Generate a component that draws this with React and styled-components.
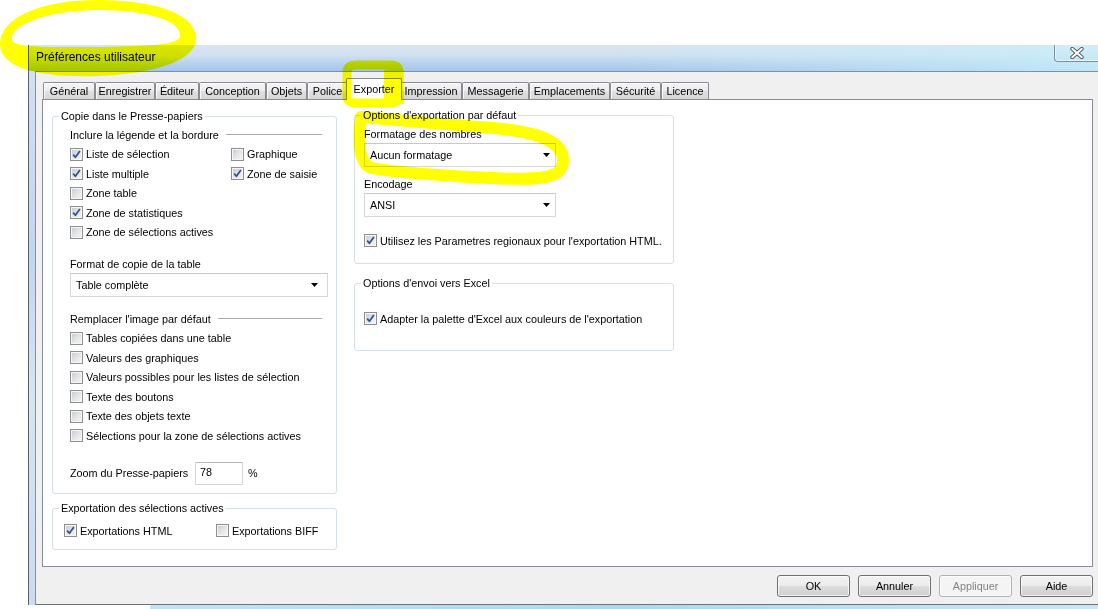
import React from 'react';
import styled, { createGlobalStyle } from 'styled-components';

const GlobalStyle = createGlobalStyle`
  html, body { margin: 0; padding: 0; background: #ffffff; }
  body {
    font-family: "Liberation Sans", Arial, sans-serif;
    font-size: 10.8px;
    color: #000;
  }
  *, *::before, *::after { box-sizing: border-box; }
`;

const Page = styled.div`
  position: relative;
  width: 1098px;
  height: 609px;
  overflow: hidden;
  background: #fff;
  padding: 45px 0 0 28px;
`;

const Window = styled.div`
  display: flex;
  flex-direction: column;
  height: 560px;
  border-left: 1px solid #56606b;
`;

const TitleBar = styled.div`
  display: flex;
  align-items: flex-start;
  height: 26px;
  flex: none;
  background:
    linear-gradient(to right, rgba(255,255,255,0) 55%, rgba(200,238,250,0.8) 100%),
    linear-gradient(to bottom, #dae6f2 0%, #cfe0f0 40%, #b6d1ee 72%, #a6c5ea 100%);
`;

const Title = styled.div`
  padding: 5px 0 0 7px;
  font-size: 12px;
  line-height: 14px;
  color: #000;
`;

const CloseButton = styled.div`
  margin-left: auto;
  width: 44px;
  height: 17px;
  display: flex;
  align-items: center;
  justify-content: center;
  border: 1px solid #7c8ea3;
  border-top: none;
  border-right: none;
  border-radius: 0 0 0 4px;
  background: linear-gradient(to bottom, #d3edf9, #c3e7f7);
  box-shadow: inset 1px 0 0 rgba(255,255,255,0.6), inset 0 -1px 0 rgba(255,255,255,0.6);
`;

const Frame = styled.div`
  flex: 1;
  display: flex;
  min-height: 0;
`;

const FrameEdge = styled.div`
  width: 6px;
  flex: none;
  background: linear-gradient(to bottom, #d2e1f0 0%, #c2d6ec 35%, #d6e5f2 60%, #cbdcee 100%);
`;

const Client = styled.div`
  flex: 1;
  display: flex;
  flex-direction: column;
  background: #f0f0f0;
  border-top: 1px solid #8a8d92;
  border-left: 1px solid #8f8f8f;
  border-bottom: 1px solid #6f7276;
  padding: 6px 5px 0 6px;
`;

const TabRow = styled.div`
  display: flex;
  align-items: flex-end;
  height: 22px;
  padding-left: 1px;
  margin-bottom: -1px;
  position: relative;
  z-index: 1;
`;

const Tab = styled.div`
  flex: none;
  position: relative;
  z-index: ${p => (p.$active ? 2 : 1)};
  width: ${p => p.$w + (p.$active ? 4 : 0)}px;
  height: ${p => (p.$active ? 22 : 17)}px;
  margin: 0 ${p => (p.$active ? -2 : 0)}px ${p => (p.$active ? 0 : 1)}px;
  display: flex;
  align-items: center;
  justify-content: center;
  border: 1px solid #898c95;
  border-bottom: none;
  border-radius: 2px 2px 0 0;
  background: ${p =>
    p.$active
      ? '#ffffff'
      : 'linear-gradient(to bottom, #f5f5f5 0%, #ececec 50%, #e0e0e0 51%, #d6d6d6 100%)'};
  box-shadow: ${p => (p.$active ? 'none' : 'inset 1px 1px 0 rgba(255,255,255,0.8)')};
  white-space: nowrap;
  line-height: 13px;
  padding-bottom: ${p => (p.$active ? 1 : 0)}px;
`;

const Panel = styled.div`
  height: 468px;
  flex: none;
  background: #fff;
  border: 1px solid #898c95;
  display: flex;
  align-items: flex-start;
  padding: 10px 0 0 9px;
`;

const Column = styled.div`
  display: flex;
  flex-direction: column;
  width: ${p => p.$w}px;
  gap: ${p => p.$gap}px;
  margin-left: ${p => p.$ml || 0}px;
  margin-top: ${p => p.$mt || 0}px;
`;

const Group = styled.fieldset`
  margin: 0;
  padding: 0 6px;
  min-width: 0;
  height: ${p => p.$h}px;
  border: 1px solid #d5dfe5;
  border-radius: 3px;
`;

const Legend = styled.legend`
  padding: 0 2px;
  line-height: 13px;
  font-size: 10.8px;
  color: #000;
`;

const GroupBody = styled.div`
  display: flex;
  flex-direction: column;
  padding-left: ${p => p.$pl}px;
  padding-top: ${p => p.$pt || 0}px;
`;

const Subheader = styled.div`
  display: flex;
  align-items: center;
  height: 19.5px;
  margin-top: ${p => p.$mt || 0}px;
  white-space: nowrap;
  &::after {
    content: '';
    flex: 1;
    border-top: 1px solid #a9a9a9;
    margin: 0 8px 0 7px;
  }
`;

const FieldLabel = styled.div`
  height: 14px;
  line-height: 14px;
  margin-top: ${p => p.$mt || 0}px;
  white-space: nowrap;
`;

const CheckGrid = styled.div`
  display: grid;
  grid-template-columns: ${p => p.$col}px auto;
  margin-top: ${p => p.$mt || 0}px;
  padding-left: ${p => p.$pl || 0}px;
`;

const CheckRow = styled.div`
  display: flex;
  align-items: center;
  gap: 3px;
  height: 19.5px;
  white-space: nowrap;
  grid-column: ${p => p.$gc || 'auto'};
  margin-top: ${p => p.$mt || 0}px;
`;

const Box = styled.span`
  width: 13px;
  height: 13px;
  flex: none;
  display: inline-flex;
  border: 1px solid #8e8f8f;
  background: #f6f6f6;
  padding: 1px;
`;

const BoxInner = styled.span`
  flex: 1;
  display: flex;
  align-items: center;
  justify-content: center;
  background: linear-gradient(135deg, #c9cdd2 0%, #e0e2e5 45%, #f3f3f4 100%);
`;

const Select = styled.div`
  width: ${p => p.$w}px;
  height: 24px;
  margin-top: 2px;
  display: flex;
  align-items: center;
  padding-left: 5px;
  background: #fff;
  border: 1px solid #d8d8d8;
  border-top-color: #c8c8c8;
`;

const SelectValue = styled.span`
  flex: 1;
  white-space: nowrap;
`;

const Caret = styled.svg`
  flex: none;
  margin-right: ${p => p.$mr}px;
`;

const ZoomRow = styled.div`
  display: flex;
  align-items: center;
  height: 23px;
  margin-top: 16px;
`;

const ZoomLabel = styled.span`
  width: 125px;
  white-space: nowrap;
`;

const NumberBox = styled.div`
  width: 48px;
  height: 23px;
  padding: 3px 0 0 4px;
  line-height: 13px;
  border: 1px solid #d3d7dc;
  border-top-color: #b8bcc2;
  background: #fff;
`;

const Unit = styled.span`
  margin-left: 5px;
`;

const ButtonRow = styled.div`
  display: flex;
  justify-content: flex-end;
  gap: 8px;
  margin-top: 8px;
`;

const Button = styled.div`
  width: 73px;
  height: 22px;
  display: flex;
  align-items: center;
  justify-content: center;
  border: 1px solid ${p => (p.$disabled ? '#adb2b5' : '#707070')};
  border-radius: 3px;
  background: ${p =>
    p.$disabled
      ? '#f4f4f4'
      : 'linear-gradient(to bottom, #f2f2f2 0%, #ebebeb 49%, #dddddd 50%, #cfcfcf 100%)'};
  color: ${p => (p.$disabled ? '#838383' : '#000')};
  box-shadow: inset 0 0 0 1px rgba(255,255,255,0.75);
`;

const BackStrip = styled.div`
  height: 4px;
  margin-left: 122px;
  background: linear-gradient(to right, #bfe4f6, #a9d9f1 50%, #c6e8f7);
`;

const Marker = styled.svg`
  position: absolute;
  left: 0;
  top: 0;
  z-index: 10;
  pointer-events: none;
  mix-blend-mode: multiply;
`;

const TABS = [
  { label: 'Général', w: 52 },
  { label: 'Enregistrer', w: 60 },
  { label: 'Éditeur', w: 44 },
  { label: 'Conception', w: 67 },
  { label: 'Objets', w: 41 },
  { label: 'Police', w: 41 },
  { label: 'Exporter', w: 52, active: true },
  { label: 'Impression', w: 62 },
  { label: 'Messagerie', w: 67 },
  { label: 'Emplacements', w: 81 },
  { label: 'Sécurité', w: 51 },
  { label: 'Licence', w: 48 },
];

function Check({ checked }) {
  return (
    <Box>
      <BoxInner>
        {checked && (
          <svg width="9" height="9" viewBox="0 0 9 9">
            <path d="M1.2 4.6 L3.4 7.3 L7.9 0.9" fill="none" stroke="#33508c" strokeWidth="1.7" strokeLinejoin="round" />
          </svg>
        )}
      </BoxInner>
    </Box>
  );
}

function CheckItem({ label, checked, gc, mt }) {
  return (
    <CheckRow $gc={gc} $mt={mt}>
      <Check checked={checked} />
      <span>{label}</span>
    </CheckRow>
  );
}

function Dropdown({ value, w, caretGap = 9 }) {
  return (
    <Select $w={w}>
      <SelectValue>{value}</SelectValue>
      <Caret $mr={caretGap} width="7" height="4" viewBox="0 0 7 4">
        <polygon points="0,0 7,0 3.5,4" fill="#000" />
      </Caret>
    </Select>
  );
}

export default function App() {
  return (
    <>
      <GlobalStyle />
      <Page>
        <Window>
          <TitleBar>
            <Title>Préférences utilisateur</Title>
            <CloseButton>
              <svg width="14" height="12" viewBox="0 0 14 12">
                <path d="M2.2 1.8 L11.8 10.2 M11.8 1.8 L2.2 10.2" stroke="#4c5866" strokeWidth="3.8" strokeLinecap="round" />
                <path d="M2.2 1.8 L11.8 10.2 M11.8 1.8 L2.2 10.2" stroke="#ffffff" strokeWidth="2" strokeLinecap="round" />
              </svg>
            </CloseButton>
          </TitleBar>
          <Frame>
            <FrameEdge />
            <Client>
              <TabRow>
                {TABS.map(t => (
                  <Tab key={t.label} $w={t.w} $active={t.active}>
                    {t.label}
                  </Tab>
                ))}
              </TabRow>
              <Panel>
                <Column $w={285} $gap={8}>
                  <Group $h={384}>
                    <Legend>Copie dans le Presse-papiers</Legend>
                    <GroupBody $pl={11} $pt={2}>
                      <Subheader>Inclure la légende et la bordure</Subheader>
                      <CheckGrid $col={161}>
                        <CheckItem label="Liste de sélection" checked />
                        <CheckItem label="Graphique" />
                        <CheckItem label="Liste multiple" checked />
                        <CheckItem label="Zone de saisie" checked />
                        <CheckItem label="Zone table" gc="1" />
                        <CheckItem label="Zone de statistiques" checked gc="1" />
                        <CheckItem label="Zone de sélections actives" gc="1" />
                      </CheckGrid>
                      <FieldLabel $mt={15}>Format de copie de la table</FieldLabel>
                      <Dropdown value="Table complète" w={258} />
                      <Subheader $mt={12}>Remplacer l'image par défaut</Subheader>
                      <CheckItem label="Tables copiées dans une table" />
                      <CheckItem label="Valeurs des graphiques" />
                      <CheckItem label="Valeurs possibles pour les listes de sélection" />
                      <CheckItem label="Texte des boutons" />
                      <CheckItem label="Texte des objets texte" />
                      <CheckItem label="Sélections pour la zone de sélections actives" />
                      <ZoomRow>
                        <ZoomLabel>Zoom du Presse-papiers</ZoomLabel>
                        <NumberBox>78</NumberBox>
                        <Unit>%</Unit>
                      </ZoomRow>
                    </GroupBody>
                  </Group>
                  <Group $h={48}>
                    <Legend>Exportation des sélections actives</Legend>
                    <CheckGrid $col={152} $mt={6} $pl={5}>
                      <CheckItem label="Exportations HTML" checked />
                      <CheckItem label="Exportations BIFF" />
                    </CheckGrid>
                  </Group>
                </Column>
                <Column $w={320} $gap={13} $ml={17} $mt={-1}>
                  <Group $h={155}>
                    <Legend>Options d'exportation par défaut</Legend>
                    <GroupBody $pl={3}>
                      <FieldLabel $mt={5}>Formatage des nombres</FieldLabel>
                      <Dropdown value="Aucun formatage" w={192} caretGap={5} />
                      <FieldLabel $mt={10}>Encodage</FieldLabel>
                      <Dropdown value="ANSI" w={192} caretGap={5} />
                      <CheckItem label="Utilisez les Parametres regionaux pour l'exportation HTML." checked mt={14} />
                    </GroupBody>
                  </Group>
                  <Group $h={74}>
                    <Legend>Options d'envoi vers Excel</Legend>
                    <GroupBody $pl={3}>
                      <CheckItem label="Adapter la palette d'Excel aux couleurs de l'exportation" checked mt={19} />
                    </GroupBody>
                  </Group>
                </Column>
              </Panel>
              <ButtonRow>
                <Button>OK</Button>
                <Button>Annuler</Button>
                <Button $disabled>Appliquer</Button>
                <Button>Aide</Button>
              </ButtonRow>
            </Client>
          </Frame>
        </Window>
        <BackStrip />
        <Marker width="1098" height="609" viewBox="0 0 1098 609">
          <path
            fillRule="evenodd"
            fill="#ffff00"
            d="M 98,0 C 160,0 198,16 196,40 C 194,62 150,74 98,76 C 40,78 0,68 0,44 C 0,18 40,0 98,0 Z
               M 98,10 C 150,10 182,22 180,36 C 178,44 160,46 98,47 C 50,47 14,48 12,40 C 10,24 50,10 98,10 Z"
          />
          <path
            d="M 347,84 L 347,72 Q 347,65 356,65 L 392,65 Q 399,65 399,73 L 399,97 Q 399,103 391,103 L 356,103 Q 347,103 347,96 Z"
            fill="none"
            stroke="#ffff00"
            strokeWidth="9"
            strokeLinecap="round"
            strokeLinejoin="round"
          />
          <path d="M 384,70 L 403,67 L 404,104 L 384,104 Z" fill="#ffff00" />
          <path
            d="M 361,117 C 400,120 440,124 480,127 C 530,130 563,138 563,160 C 563,180 540,181 470,177 C 420,174 390,172 372,168 C 358,164 358,140 361,117 Z"
            fill="none"
            stroke="#ffff00"
            strokeWidth="12"
            strokeLinejoin="round"
          />
        </Marker>
      </Page>
    </>
  );
}
